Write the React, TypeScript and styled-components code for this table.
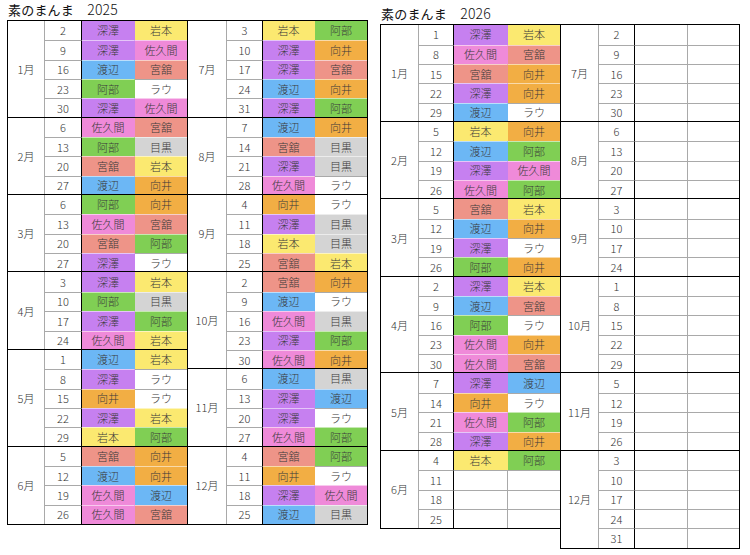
import React from "react";
import styled, { createGlobalStyle } from "styled-components";

const GlobalStyle = createGlobalStyle`
  html, body { margin: 0; padding: 0; background: #fff; }
  body { font-family: "Noto Sans CJK JP", "Noto Sans", sans-serif; color: #222; }
`;

const COLORS: Record<string, string> = {
  深澤: "#c680f0",
  岩本: "#fbe970",
  佐久間: "#ef8ad9",
  宮舘: "#ee9488",
  渡辺: "#6cb7f5",
  阿部: "#80cf54",
  向井: "#f2ae44",
  目黒: "#d4d4d4",
  ラウ: "#ffffff",
};

type Row = [number, string?, string?];
type Month = { label: string; rows: Row[] };

const d2025L: Month[] = [
  { label: "1月", rows: [[2, "深澤", "岩本"], [9, "深澤", "佐久間"], [16, "渡辺", "宮舘"], [23, "阿部", "ラウ"], [30, "深澤", "佐久間"]] },
  { label: "2月", rows: [[6, "佐久間", "宮舘"], [13, "阿部", "目黒"], [20, "宮舘", "岩本"], [27, "渡辺", "向井"]] },
  { label: "3月", rows: [[6, "阿部", "向井"], [13, "佐久間", "宮舘"], [20, "宮舘", "阿部"], [27, "深澤", "ラウ"]] },
  { label: "4月", rows: [[3, "深澤", "岩本"], [10, "阿部", "目黒"], [17, "深澤", "阿部"], [24, "佐久間", "岩本"]] },
  { label: "5月", rows: [[1, "渡辺", "岩本"], [8, "深澤", "ラウ"], [15, "向井", "ラウ"], [22, "深澤", "岩本"], [29, "岩本", "阿部"]] },
  { label: "6月", rows: [[5, "宮舘", "向井"], [12, "渡辺", "向井"], [19, "佐久間", "渡辺"], [26, "佐久間", "宮舘"]] },
];

const d2025R: Month[] = [
  { label: "7月", rows: [[3, "岩本", "阿部"], [10, "深澤", "向井"], [17, "深澤", "宮舘"], [24, "渡辺", "向井"], [31, "深澤", "阿部"]] },
  { label: "8月", rows: [[7, "渡辺", "向井"], [14, "宮舘", "目黒"], [21, "深澤", "目黒"], [28, "佐久間", "ラウ"]] },
  { label: "9月", rows: [[4, "向井", "ラウ"], [11, "深澤", "目黒"], [18, "岩本", "目黒"], [25, "宮舘", "岩本"]] },
  { label: "10月", rows: [[2, "宮舘", "向井"], [9, "渡辺", "ラウ"], [16, "佐久間", "目黒"], [23, "深澤", "阿部"], [30, "佐久間", "向井"]] },
  { label: "11月", rows: [[6, "渡辺", "目黒"], [13, "深澤", "渡辺"], [20, "深澤", "ラウ"], [27, "佐久間", "阿部"]] },
  { label: "12月", rows: [[4, "宮舘", "阿部"], [11, "向井", "ラウ"], [18, "深澤", "佐久間"], [25, "渡辺", "目黒"]] },
];

const d2026L: Month[] = [
  { label: "1月", rows: [[1, "深澤", "岩本"], [8, "佐久間", "宮舘"], [15, "宮舘", "向井"], [22, "深澤", "向井"], [29, "渡辺", "ラウ"]] },
  { label: "2月", rows: [[5, "岩本", "向井"], [12, "渡辺", "阿部"], [19, "深澤", "佐久間"], [26, "佐久間", "阿部"]] },
  { label: "3月", rows: [[5, "宮舘", "岩本"], [12, "渡辺", "向井"], [19, "深澤", "ラウ"], [26, "阿部", "向井"]] },
  { label: "4月", rows: [[2, "深澤", "岩本"], [9, "渡辺", "宮舘"], [16, "阿部", "ラウ"], [23, "佐久間", "向井"], [30, "佐久間", "宮舘"]] },
  { label: "5月", rows: [[7, "深澤", "渡辺"], [14, "向井", "ラウ"], [21, "佐久間", "阿部"], [28, "深澤", "向井"]] },
  { label: "6月", rows: [[4, "岩本", "阿部"], [11], [18], [25]] },
];

const d2026R: Month[] = [
  { label: "7月", rows: [[2], [9], [16], [23], [30]] },
  { label: "8月", rows: [[6], [13], [20], [27]] },
  { label: "9月", rows: [[3], [10], [17], [24]] },
  { label: "10月", rows: [[1], [8], [15], [22], [29]] },
  { label: "11月", rows: [[5], [12], [19], [26]] },
  { label: "12月", rows: [[3], [10], [17], [24], [31]] },
];

const ROW_H = 19.35;
const GRID = "#a9a9a9";

const Page = styled.div`
  display: flex;
  align-items: flex-start;
  gap: 12px;
  padding-left: 7px;
`;

const Year = styled.section<{ $top: number }>`
  display: flex;
  flex-direction: column;
  margin-top: ${(p) => p.$top}px;
`;

const Title = styled.h1`
  margin: 0 0 3px 1px;
  padding-top: 2px;
  font-size: 13px;
  line-height: 15px;
  font-weight: 400;
  color: #111;
  letter-spacing: 0.2px;
`;

const TitleYear = styled.span`
  font-size: 14px;
  font-weight: 300;
`;

const Tables = styled.div`
  display: flex;
  align-items: flex-start;
`;

const Half = styled.div<{ $overlap?: boolean }>`
  border: 1px solid #000;
  margin-left: ${(p) => (p.$overlap ? -1 : 0)}px;
  display: flex;
  flex-direction: column;
`;

const Group = styled.div<{ $cols: string; $n: number; $first: boolean }>`
  display: grid;
  grid-template-columns: ${(p) => p.$cols};
  grid-template-rows: repeat(${(p) => p.$n}, ${ROW_H}px);
  border-top: ${(p) => (p.$first ? "none" : "1px solid #000")};
  margin-top: ${(p) => (p.$first ? 0 : -1)}px;
`;

const cellText = `
  box-sizing: border-box;
  display: flex;
  align-items: center;
  justify-content: center;
  font-size: 11px;
  font-weight: 300;
  line-height: 1;
  white-space: nowrap;
`;

const MonthCell = styled.div`
  ${cellText}
  grid-column: 1;
  grid-row: 1 / -1;
  border-right: 1px solid ${GRID};
  color: #333;
`;

const DayCell = styled.div<{ $first: boolean }>`
  ${cellText}
  grid-column: 2;
  border-right: 1px solid #000;
  border-top: ${(p) => (p.$first ? "none" : `1px solid ${GRID}`)};
  color: #333;
`;

const NameCell = styled.div<{ $bg?: string; $first: boolean; $left: boolean }>`
  ${cellText}
  background: ${(p) => p.$bg ?? "#fff"};
  color: #3a3a3a;
  border-top: ${(p) =>
    p.$first ? "none" : `1px solid ${p.$bg && p.$bg !== "#ffffff" ? "rgba(255,255,255,0.55)" : GRID}`};
  border-right: ${(p) => (p.$left ? `1px solid ${p.$bg ? "transparent" : GRID}` : "none")};
`;

function Table({ data, cols, overlap }: { data: Month[]; cols: string; overlap?: boolean }) {
  return (
    <Half $overlap={overlap}>
      {data.map((m, gi) => (
        <Group key={m.label} $cols={cols} $n={m.rows.length} $first={gi === 0}>
          <MonthCell>{m.label}</MonthCell>
          {m.rows.map(([day, a, b], ri) => (
            <React.Fragment key={day}>
              <DayCell $first={ri === 0} style={{ gridRow: ri + 1 }}>{day}</DayCell>
              <NameCell $first={ri === 0} $left $bg={a ? COLORS[a] : undefined} style={{ gridRow: ri + 1 }}>
                {a}
              </NameCell>
              <NameCell $first={ri === 0} $left={false} $bg={b ? COLORS[b] : undefined} style={{ gridRow: ri + 1 }}>
                {b}
              </NameCell>
            </React.Fragment>
          ))}
        </Group>
      ))}
    </Half>
  );
}

export default function App() {
  return (
    <>
      <GlobalStyle />
      <Page>
        <Year $top={0}>
          <Title>
            素のまんま　<TitleYear>2025</TitleYear>
          </Title>
          <Tables>
            <Table data={d2025L} cols="37px 37px 53px 52px" />
            <Table data={d2025R} cols="39px 36px 52px 52px" overlap />
          </Tables>
        </Year>
        <Year $top={4.3}>
          <Title>
            素のまんま　<TitleYear>2026</TitleYear>
          </Title>
          <Tables>
            <Table data={d2026L} cols="38px 35px 54px 52px" />
            <Table data={d2026R} cols="38px 36px 53px 51px" overlap />
          </Tables>
        </Year>
      </Page>
    </>
  );
}
